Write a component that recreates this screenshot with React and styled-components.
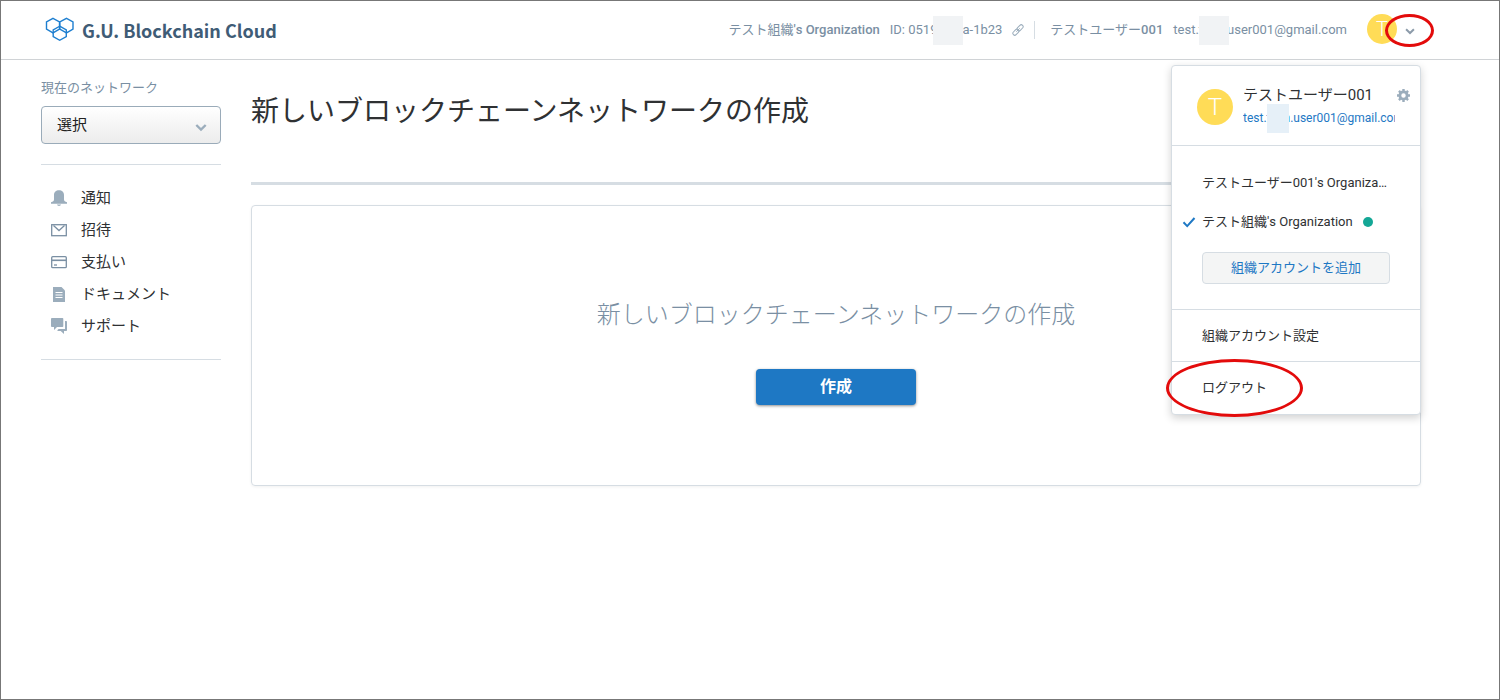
import React from "react";
import styled, { createGlobalStyle } from "styled-components";

const c = {
  line: "#d6dde3",
  muted: "#7a8fa3",
  icon: "#9badbc",
  text: "#2f3133",
  blue: "#1e78c4",
  yellow: "#ffdc57",
  red: "#e30b0b",
};

const GlobalStyle = createGlobalStyle`
  *, *::before, *::after { box-sizing: border-box; }
  body {
    margin: 0;
    background: #fff;
    color: ${c.text};
    font-family: Roboto, "Noto Sans CJK JP", sans-serif;
    font-size: 13px;
    line-height: 20px;
  }
  button, select { font: inherit; color: inherit; cursor: pointer; }
  h1, h2, p, ul { margin: 0; padding: 0; }
  ul { list-style: none; }
  svg { display: block; flex: none; }
`;

const Page = styled.div`
  min-height: 100vh;
  border: 1px solid #777;
`;

const Header = styled.header`
  display: flex;
  align-items: center;
  justify-content: space-between;
  height: 59px;
  padding: 0 78px 0 44px;
  border-bottom: 1px solid #d0d3d6;
`;

const Brand = styled.a`
  display: flex;
  align-items: center;
  gap: 7px;
  color: #3f5c76;
  font-family: "Noto Sans CJK JP", sans-serif;
  font-size: 18px;
  font-weight: 700;
  line-height: 30px;
  text-decoration: none;
  white-space: nowrap;
`;

const Account = styled.div`
  display: flex;
  align-items: center;
  gap: 10px;
  color: ${c.muted};
  white-space: nowrap;
`;

const Name = styled.span`
  font-weight: 500;
  & > span { font-weight: 400; }
`;

const IconButton = styled.button`
  display: flex;
  padding: 0;
  border: 0;
  background: none;
  color: ${c.icon};
`;

const Divider = styled.span`
  width: 1px;
  height: 18px;
  margin-right: 5px;
  background: ${c.line};
`;

const Redaction = styled.span`
  display: inline-block;
  position: relative;
  z-index: 1;
  width: ${(p) => p.$width}px;
  height: 29px;
  margin: -8px ${(p) => -p.$overlap}px -8px -4px;
  vertical-align: middle;
  background: ${(p) => p.$color};
`;

const UserMenu = styled.div`
  position: relative;
  margin-left: 10px;
  padding: 0 6px 2px 0;
`;

const MenuTrigger = styled.button`
  display: flex;
  align-items: center;
  gap: 8px;
  padding: 0;
  border: 0;
  background: none;
  color: #8c9baa;

  & > svg { margin-top: 3px; }
`;

const Avatar = styled.span`
  flex: none;
  width: ${(p) => p.$size}px;
  height: ${(p) => p.$size}px;
  border-radius: 50%;
  background: ${c.yellow};
  color: #fff;
  font-size: ${(p) => (p.$size > 30 ? 24 : 20)}px;
  font-weight: 300;
  line-height: ${(p) => p.$size}px;
  text-align: center;
`;

const TriggerRing = styled.span`
  position: absolute;
  top: 0;
  right: -13px;
  width: 49px;
  height: 33px;
  border: 3px solid ${c.red};
  border-radius: 50%;
  pointer-events: none;
`;

const Dropdown = styled.div`
  position: absolute;
  top: 51px;
  right: 0;
  z-index: 2;
  width: 250px;
  padding-bottom: 1px;
  border: 1px solid ${c.line};
  border-radius: 4px;
  background: #fff;
  box-shadow: 0 3px 8px rgba(0, 0, 0, 0.18);
  color: ${c.text};
`;

const Profile = styled.div`
  display: flex;
  gap: 10px;
  height: 80px;
  padding: 17px 10px 0 25px;
  border-bottom: 1px solid ${c.line};

  ${Avatar} { margin-top: 6px; }
  ${IconButton} { margin: 6px 0 0 -8px; align-self: flex-start; }
`;

const ProfileText = styled.div`
  flex: 1;
  min-width: 0;
  font-size: 15px;
  line-height: 24px;
`;

const Email = styled.a`
  display: block;
  overflow-x: clip;
  overflow-y: visible;
  color: ${c.blue};
  font-size: 12px;
  line-height: 22px;
  text-decoration: none;
`;

const Organizations = styled.div`
  padding: 17px 30px 25px;
`;

const OrgButton = styled.button`
  display: flex;
  align-items: center;
  gap: 6px;
  width: calc(100% + 20px);
  height: 39px;
  margin-left: -20px;
  padding: 0;
  border: 0;
  background: none;
`;

const CheckSlot = styled.span`
  flex: none;
  width: 14px;
`;

const OrgName = styled.span`
  overflow: hidden;
  text-overflow: ellipsis;
  white-space: nowrap;
`;

const StatusDot = styled.span`
  flex: none;
  width: 10px;
  height: 10px;
  margin-left: 4px;
  border-radius: 50%;
  background: #14a796;
`;

const AddButton = styled.button`
  display: block;
  width: 100%;
  height: 32px;
  margin-top: 11px;
  padding: 0;
  border: 1px solid ${c.line};
  border-radius: 4px;
  background: #f4f5f5;
  color: ${c.blue};
`;

const MenuItem = styled.button`
  display: block;
  position: relative;
  width: 100%;
  height: 52px;
  padding: 0 30px;
  border: 0;
  border-top: 1px solid ${c.line};
  background: none;
  text-align: left;
`;

const ItemRing = styled.span`
  position: absolute;
  top: -3px;
  left: -6px;
  width: 137px;
  height: 58px;
  border: 3px solid ${c.red};
  border-radius: 50%;
  pointer-events: none;
`;

const Layout = styled.div`
  display: flex;
  align-items: flex-start;
  gap: 30px;
  padding: 18px 78px 40px 40px;
`;

const Sidebar = styled.aside`
  flex: none;
  width: 180px;
`;

const Label = styled.label`
  display: block;
  color: ${c.muted};
`;

const SelectBox = styled.div`
  display: grid;
  align-items: center;
  margin-top: 8px;

  & > * { grid-area: 1 / 1; }
  & > svg {
    justify-self: end;
    margin: 4px 14px 0 0;
    color: ${c.icon};
    pointer-events: none;
  }
`;

const Select = styled.select`
  width: 100%;
  height: 38px;
  padding: 0 15px;
  border: 1px solid #9aabb9;
  border-radius: 4px;
  appearance: none;
  background: linear-gradient(#fff, #ececec);
  font-size: 15px;
  color: #222;
`;

const Nav = styled.nav`
  margin-top: 20px;
  padding: 17px 0;
  border-top: 1px solid ${c.line};
  border-bottom: 1px solid ${c.line};
`;

const NavLink = styled.a`
  display: flex;
  align-items: center;
  gap: 14px;
  height: 32px;
  padding-left: 10px;
  color: ${c.text};
  font-size: 15px;
  text-decoration: none;

  & > svg { color: ${c.icon}; }
`;

const Main = styled.main`
  flex: 1;
  min-width: 0;
`;

const Title = styled.h1`
  padding: 14px 0 50px;
  border-bottom: 3px solid ${c.line};
  font-size: 28px;
  font-weight: 400;
  line-height: 40px;
`;

const Card = styled.section`
  display: flex;
  flex-direction: column;
  align-items: center;
  gap: 36px;
  margin-top: 20px;
  padding: 91px 20px 80px;
  border: 1px solid ${c.line};
  border-radius: 4px;
  box-shadow: 0 1px 3px rgba(0, 0, 0, 0.06);
`;

const CardTitle = styled.h2`
  color: ${c.muted};
  font-size: 24px;
  font-weight: 300;
  line-height: 36px;
`;

const CreateButton = styled.button`
  width: 160px;
  height: 36px;
  padding: 0;
  border: 0;
  border-radius: 4px;
  background: ${c.blue};
  box-shadow: 0 1px 3px rgba(0, 0, 0, 0.45);
  color: #fff;
  font-size: 16px;
  font-weight: 700;
`;

const Logo = () => (
  <svg width="30" height="26" viewBox="0 0 30 26" fill="none" stroke="#1e7fd0" strokeWidth="1.4" aria-hidden="true">
    <path d="M8 1.300 14.500 4.800v7.400L8 15.900 1.500 12.200V4.800z" />
    <path d="M21.500 1.300 28 4.800v7.400l-6.500 3.700-6.700-3.700V4.800z" />
    <path d="M14.700 9.200 21.300 12.800v6.800l-6.600 3.700-6.500-3.700v-6.800z" />
  </svg>
);

const Chevron = ({ size }) => (
  <svg width={size} height={size} viewBox="0 0 12 12" fill="none" stroke="currentColor" strokeWidth="2.4" aria-hidden="true">
    <path d="m1.300 4 4.700 4.500L10.700 4" />
  </svg>
);

const LinkIcon = () => (
  <svg width="12" height="12" viewBox="0 0 12 12" fill="none" stroke="currentColor" strokeWidth="1" aria-hidden="true">
    <rect x="4.600" y="1.900" width="7" height="3.800" rx="1.900" transform="rotate(-45 8.100 3.800)" />
    <rect x=".4" y="6.300" width="7" height="3.800" rx="1.900" transform="rotate(-45 3.900 8.200)" />
    <path d="m4.300 7.700 3.400-3.400" />
  </svg>
);

const Gear = () => (
  <svg width="13" height="13" viewBox="0 0 14 14" fill="none" stroke="currentColor" aria-hidden="true">
    <circle cx="7" cy="7" r="3.900" strokeWidth="3" />
    <path strokeWidth="2.600" d="M7 0v2.500M7 11.500V14M0 7h2.500M11.500 7H14M2.100 2.100l1.700 1.700M10.200 10.200l1.700 1.700M2.100 11.900l1.700-1.700M10.200 3.800l1.700-1.700" />
  </svg>
);

const Check = () => (
  <svg width="14" height="12" viewBox="0 0 14 12" fill="none" stroke={c.blue} strokeWidth="2" aria-hidden="true">
    <path d="m1.500 6.300 3.700 3.800L12.500 2" />
  </svg>
);

const NavIcon = ({ children }) => (
  <svg width="16" height="16" viewBox="0 0 16 16" fill="currentColor" aria-hidden="true">
    {children}
  </svg>
);

const navItems = [
  {
    label: "通知",
    icon: <path d="M8 .3c-3 0-5 2-5 4.800v4.400c0 1.500-1 2.200-3 2.800v1.400h16v-1.400c-2-.6-3-1.300-3-2.800V5.100C13 2.300 11 .3 8 .3zM6 14.600h4c-.3 1-1 1.400-2 1.400s-1.700-.4-2-1.400z" />,
  },
  {
    label: "招待",
    icon: (
      <g fill="none" stroke="#7a8fa3" strokeWidth="1.300">
        <rect x=".7" y="2.700" width="14.600" height="11" />
        <path d="m2.500 3.500 5.500 5 5.500-5" />
      </g>
    ),
  },
  {
    label: "支払い",
    icon: (
      <g fill="none" stroke="#7a8fa3" strokeWidth="1.300">
        <rect x=".7" y="2.700" width="14.600" height="11" rx="1" />
        <path strokeWidth="1.600" d="M1 6.300h14" />
        <path d="M3 11h3" />
      </g>
    ),
  },
  {
    label: "ドキュメント",
    icon: (
      <>
        <path d="M2 1h8.500L14 4.500V16H2z" />
        <path d="M4.500 6.500h7M4.500 9h7M4.500 11.500h7" stroke="#fff" strokeWidth="1" />
      </>
    ),
  },
  {
    label: "サポート",
    icon: <path d="M1 0h10.500q.8 0 .8.800v7.400q0 .8-.8.800H6l-3 3V9H1q-1 0-1-.8V.8Q0 0 1 0zM14 3h1.200q.8 0 .8.800v8.400q0 .8-.8.800H13v3l-3.300-3H6.500v-1l1.200-1H14z" />,
  },
];

export default function App() {
  return (
    <Page>
      <GlobalStyle />
      <Header>
        <Brand href="#">
          <Logo />
          G.U. Blockchain Cloud
        </Brand>
        <Account>
          <Name><span>テスト組織</span>'s Organization</Name>
          <span>ID: 0519<Redaction $width={30} $overlap={1} $color="#f1f3f5" />a-1b23</span>
          <IconButton aria-label="IDのリンクをコピー"><LinkIcon /></IconButton>
          <Divider />
          <Name><span>テストユーザー</span>001</Name>
          <span>test.t<Redaction $width={30} $overlap={2} $color="#f1f3f5" />user001@gmail.com</span>
          <UserMenu>
            <MenuTrigger aria-label="アカウントメニュー" aria-expanded="true">
              <Avatar $size={30}>T</Avatar>
              <Chevron size={10} />
            </MenuTrigger>
            <TriggerRing />
            <Dropdown>
              <Profile>
                <Avatar $size={36}>T</Avatar>
                <ProfileText>
                  <p>テストユーザー001</p>
                  <Email href="#">test.t<Redaction $width={22} $overlap={5} $color="#e6f0f8" />n.user001@gmail.com</Email>
                </ProfileText>
                <IconButton aria-label="設定"><Gear /></IconButton>
              </Profile>
              <Organizations>
                <OrgButton>
                  <CheckSlot />
                  <OrgName>テストユーザー001's Organization</OrgName>
                </OrgButton>
                <OrgButton>
                  <CheckSlot><Check /></CheckSlot>
                  <OrgName>テスト組織's Organization</OrgName>
                  <StatusDot />
                </OrgButton>
                <AddButton>組織アカウントを追加</AddButton>
              </Organizations>
              <MenuItem>組織アカウント設定</MenuItem>
              <MenuItem>
                ログアウト
                <ItemRing />
              </MenuItem>
            </Dropdown>
          </UserMenu>
        </Account>
      </Header>
      <Layout>
        <Sidebar>
          <Label htmlFor="network">現在のネットワーク</Label>
          <SelectBox>
            <Select id="network" defaultValue="">
              <option value="">選択</option>
            </Select>
            <Chevron size={12} />
          </SelectBox>
          <Nav>
            <ul>
              {navItems.map(({ label, icon }) => (
                <li key={label}>
                  <NavLink href="#">
                    <NavIcon>{icon}</NavIcon>
                    {label}
                  </NavLink>
                </li>
              ))}
            </ul>
          </Nav>
        </Sidebar>
        <Main>
          <Title>新しいブロックチェーンネットワークの作成</Title>
          <Card>
            <CardTitle>新しいブロックチェーンネットワークの作成</CardTitle>
            <CreateButton>作成</CreateButton>
          </Card>
        </Main>
      </Layout>
    </Page>
  );
}
